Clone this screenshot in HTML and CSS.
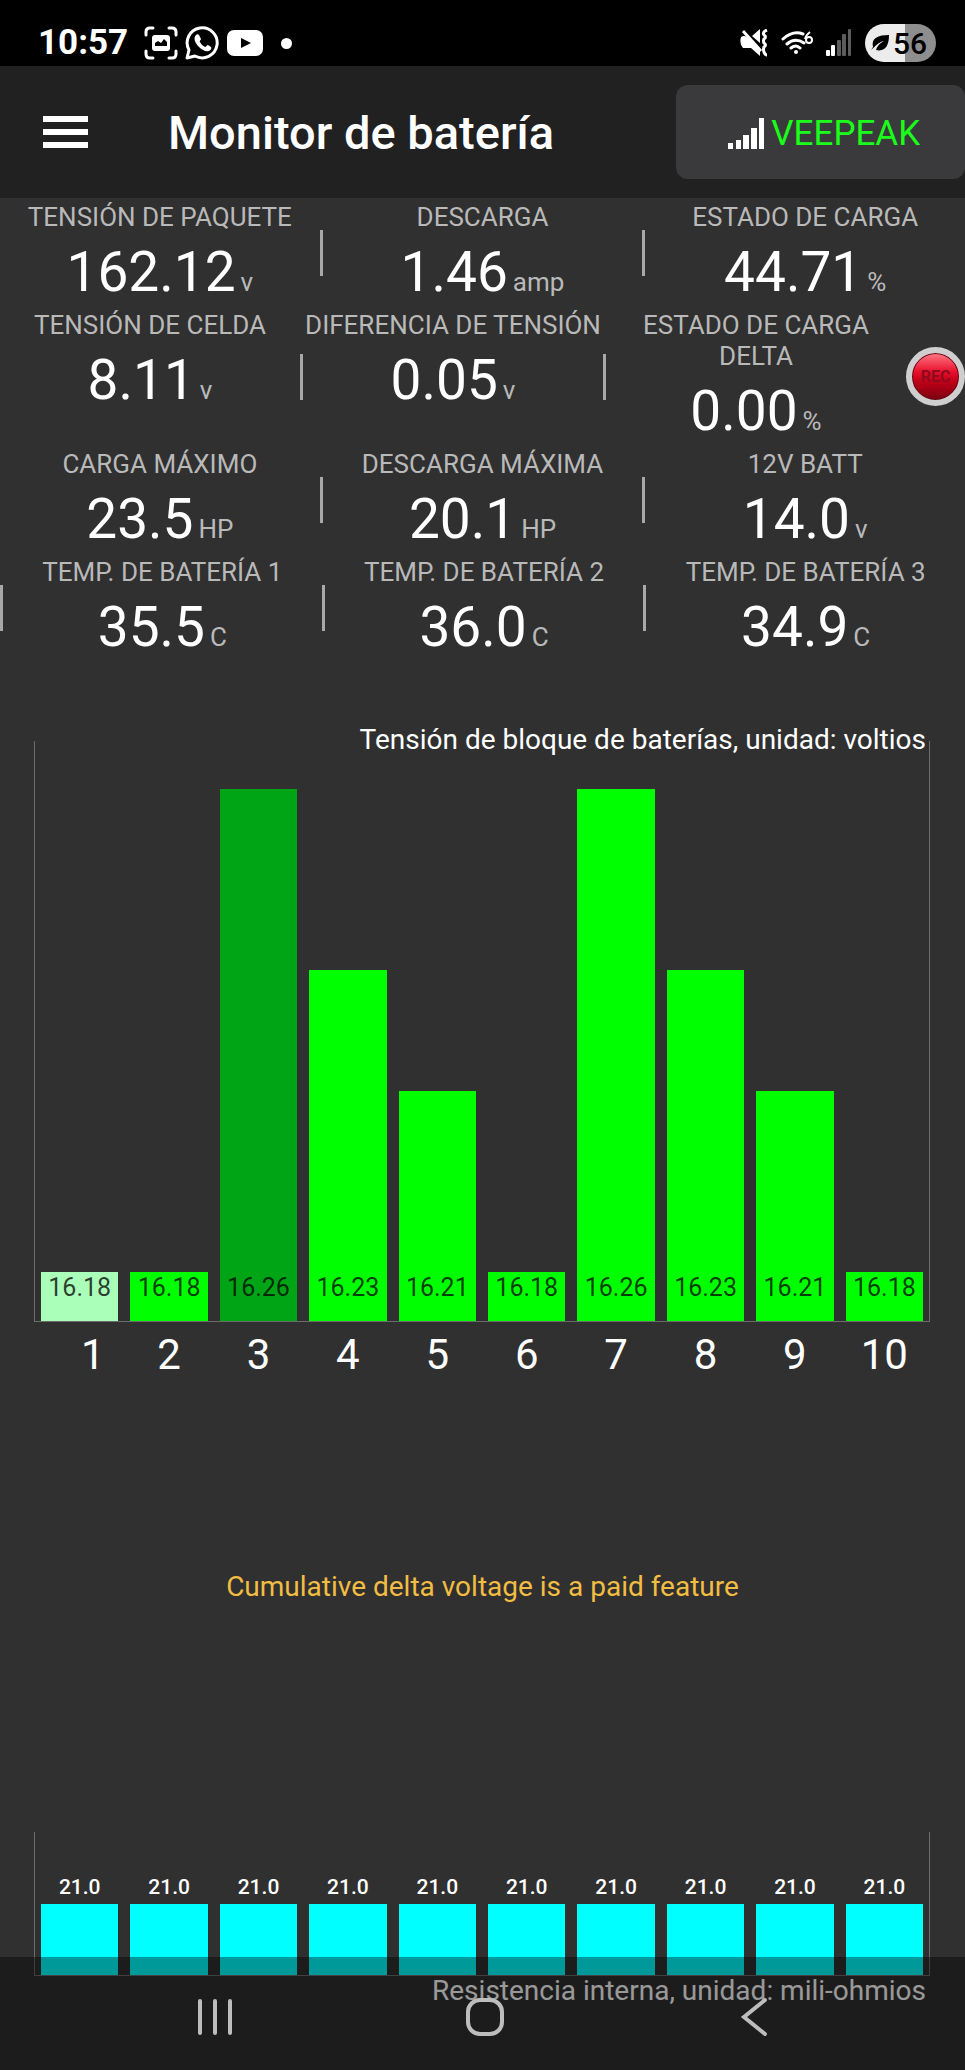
FILE: index.html
```html
<!DOCTYPE html>
<html lang="es">
<head>
    <meta charset="UTF-8">
    <meta name="viewport" content="width=device-width, initial-scale=1.0">
    <title>Monitor de batería</title>
    <link rel="stylesheet" href="styles.css">
</head>
<body>
<div class="status-bar">
    <span class="clock">10:57</span>
    <div class="status-left">
        <svg width="34" height="34" viewBox="0 0 34 34" fill="none" stroke="#fff" stroke-width="3" stroke-linecap="round">
            <path d="M2 9V6q0-4 4-4h3M25 2h3q4 0 4 4v3M32 25v3q0 4-4 4h-3M9 32H6q-4 0-4-4v-3"/>
            <rect x="8" y="9" width="18" height="16" rx="3" fill="#fff" stroke="none"/>
            <path d="M11 20v-3l3-2 3 2 3-4 3 3v4z" fill="#000" stroke="none"/>
        </svg>
        <svg width="34" height="34" viewBox="0 0 34 34">
            <path d="M2 32l2-8A15 15 0 1 1 10 30z" fill="none" stroke="#fff" stroke-width="3" stroke-linejoin="round"/>
            <path d="M11 9c1-1 2-1 3 0l2 4c0 1-2 2-1 3 1 2 3 4 5 5 1 0 2-2 3-2l3 2c1 1 0 3-2 4-3 1-7-1-10-4-4-4-6-9-3-12z" fill="#fff"/>
        </svg>
        <svg width="38" height="28" viewBox="0 0 38 28">
            <rect x="1" y="1" width="36" height="26" rx="7" fill="#fff"/>
            <path d="M15 9l10 5-10 5z" fill="#000"/>
        </svg>
        <span class="more-dot"></span>
    </div>
    <div class="status-right">
        <svg width="28" height="28" viewBox="0 0 28 28">
            <path d="M1 8q3-2 6 0l13 13v6l-9-8H3q-4-4-2-11zM12 7l8-7v14z" fill="#fff"/>
            <path d="M3 2l18 20" stroke="#fff" stroke-width="3"/>
            <path d="M27 1q-5 2-3 5 3 2 0 4-1 2 0 4 3 2 0 4-1 3 0 5 1 3 3 3" fill="none" stroke="#fff" stroke-width="3"/>
        </svg>
        <svg width="32" height="24" viewBox="0 0 32 24">
            <path d="M2 8q10-9 20-5M6 13q8-7 17-1M10 17q5-4 9 0" fill="none" stroke="#fff" stroke-width="3" stroke-linecap="round"/>
            <circle cx="15" cy="21" r="2" fill="#fff"/>
            <path d="M29 1q-4 3-5 7" fill="none" stroke="#fff" stroke-width="2"/>
            <circle cx="28" cy="9" r="3" fill="none" stroke="#fff" stroke-width="2"/>
        </svg>
        <svg width="26" height="28" viewBox="0 0 26 28" fill="#5c5c5c">
            <rect x="0" y="21" width="4" height="6" rx="1" fill="#fff"/>
            <rect x="5" y="16" width="4" height="11" rx="1" fill="#fff"/>
            <rect x="11" y="11" width="4" height="16" rx="1"/>
            <rect x="16" y="5" width="4" height="22" rx="1"/>
            <rect x="22" y="0" width="3" height="27" rx="1"/>
        </svg>
        <span class="battery">
            <svg width="20" height="18" viewBox="0 0 20 18">
                <path d="M3 13C1 4 8 1 19 1c0 11-4 17-13 15 1-4 4-7 8-9-6 1-9 6-13 9z" fill="#000"/>
            </svg>
            56
        </span>
    </div>
</div>

<header class="header">
    <button type="button" class="menu-button" aria-label="Menú">
        <span></span>
        <span></span>
        <span></span>
    </button>
    <h1>Monitor de batería</h1>
    <button type="button" class="device-button">
        <svg width="36" height="31" viewBox="0 0 36 31" fill="#fff">
            <rect x="0" y="25" width="5" height="6"/>
            <rect x="8" y="22" width="5" height="9"/>
            <rect x="15" y="17" width="6" height="14"/>
            <rect x="23" y="10" width="6" height="21"/>
            <rect x="31" y="0" width="5" height="31"/>
        </svg>
        VEEPEAK
    </button>
</header>

<main>
    <!-- lecturas -->
    <section class="readings">
        <div class="row">
            <div class="cell">
                <div class="label">TENSIÓN DE PAQUETE</div>
                <div class="value">162.12<small>v</small></div>
            </div>
            <i class="sep"></i>
            <div class="cell">
                <div class="label">DESCARGA</div>
                <div class="value">1.46<small>amp</small></div>
            </div>
            <i class="sep"></i>
            <div class="cell">
                <div class="label">ESTADO DE CARGA</div>
                <div class="value">44.71<small>%</small></div>
            </div>
        </div>
        <div class="row">
            <div class="cell">
                <div class="label">TENSIÓN DE CELDA</div>
                <div class="value">8.11<small>v</small></div>
            </div>
            <i class="sep"></i>
            <div class="cell">
                <div class="label">DIFERENCIA DE TENSIÓN</div>
                <div class="value">0.05<small>v</small></div>
            </div>
            <i class="sep"></i>
            <div class="cell">
                <div class="label">ESTADO DE CARGA DELTA</div>
                <div class="value">0.00<small>%</small></div>
            </div>
            <button type="button" class="rec-button">REC</button>
        </div>
        <div class="row">
            <div class="cell">
                <div class="label">CARGA MÁXIMO</div>
                <div class="value">23.5<small>HP</small></div>
            </div>
            <i class="sep"></i>
            <div class="cell">
                <div class="label">DESCARGA MÁXIMA</div>
                <div class="value">20.1<small>HP</small></div>
            </div>
            <i class="sep"></i>
            <div class="cell">
                <div class="label">12V BATT</div>
                <div class="value">14.0<small>v</small></div>
            </div>
        </div>
        <div class="row">
            <i class="sep"></i>
            <div class="cell">
                <div class="label">TEMP. DE BATERÍA 1</div>
                <div class="value">35.5<small>C</small></div>
            </div>
            <i class="sep"></i>
            <div class="cell">
                <div class="label">TEMP. DE BATERÍA 2</div>
                <div class="value">36.0<small>C</small></div>
            </div>
            <i class="sep"></i>
            <div class="cell">
                <div class="label">TEMP. DE BATERÍA 3</div>
                <div class="value">34.9<small>C</small></div>
            </div>
        </div>
    </section>

    <!-- tensión por bloque -->
    <section class="chart">
        <h2 class="chart-title">Tensión de bloque de baterías, unidad: voltios</h2>
        <div class="plot voltage">
            <div class="bar min" style="height:49px">16.18</div>
            <div class="bar" style="height:49px">16.18</div>
            <div class="bar max" style="height:532px">16.26</div>
            <div class="bar" style="height:351px">16.23</div>
            <div class="bar" style="height:230px">16.21</div>
            <div class="bar" style="height:49px">16.18</div>
            <div class="bar" style="height:532px">16.26</div>
            <div class="bar" style="height:351px">16.23</div>
            <div class="bar" style="height:230px">16.21</div>
            <div class="bar" style="height:49px">16.18</div>
        </div>
        <div class="axis">
            <span>1</span>
            <span>2</span>
            <span>3</span>
            <span>4</span>
            <span>5</span>
            <span>6</span>
            <span>7</span>
            <span>8</span>
            <span>9</span>
            <span>10</span>
        </div>
    </section>

    <p class="notice">Cumulative delta voltage is a paid feature</p>

    <!-- resistencia interna -->
    <section class="chart">
        <div class="plot resistance">
            <div class="item"><span>21.0</span><div class="bar" style="height:71px"></div></div>
            <div class="item"><span>21.0</span><div class="bar" style="height:71px"></div></div>
            <div class="item"><span>21.0</span><div class="bar" style="height:71px"></div></div>
            <div class="item"><span>21.0</span><div class="bar" style="height:71px"></div></div>
            <div class="item"><span>21.0</span><div class="bar" style="height:71px"></div></div>
            <div class="item"><span>21.0</span><div class="bar" style="height:71px"></div></div>
            <div class="item"><span>21.0</span><div class="bar" style="height:71px"></div></div>
            <div class="item"><span>21.0</span><div class="bar" style="height:71px"></div></div>
            <div class="item"><span>21.0</span><div class="bar" style="height:71px"></div></div>
            <div class="item"><span>21.0</span><div class="bar" style="height:71px"></div></div>
        </div>
        <h2 class="chart-title">Resistencia interna, unidad: mili-ohmios</h2>
    </section>
</main>

<nav class="nav-bar">
    <button type="button" aria-label="Recientes">
        <svg width="40" height="40" viewBox="0 0 40 40"><path d="M5 4v32M20 4v32M35 4v32"/></svg>
    </button>
    <button type="button" aria-label="Inicio">
        <svg width="40" height="40" viewBox="0 0 40 40"><rect x="3" y="3" width="34" height="34" rx="12"/></svg>
    </button>
    <button type="button" aria-label="Atrás">
        <svg width="40" height="40" viewBox="0 0 40 40"><path d="M30 3L9 20l21 17"/></svg>
    </button>
</nav>
</body>
</html>
```

FILE: styles.css
```css
* {
    box-sizing: border-box;
}

body {
    margin: 0;
    background-color: #303030;
    color: #fff;
    font-family: Roboto, "Liberation Sans", sans-serif;
}

h1, h2, p {
    margin: 0;
}

button {
    border: none;
    padding: 0;
    background: none;
    color: inherit;
    font-family: inherit;
}

/* barra de estado */
.status-bar {
    display: flex;
    align-items: center;
    height: 66px;
    padding: 20px 29px 0 38px;
    background-color: #000;
}

.clock {
    font-size: 35px;
    font-weight: 700;
    line-height: 46px;
}

.status-left {
    display: flex;
    align-items: center;
    gap: 7px;
    margin-left: 16px;
}

.more-dot {
    width: 11px;
    height: 11px;
    margin-left: 10px;
    border-radius: 50%;
    background-color: #fff;
}

.status-right {
    display: flex;
    align-items: center;
    gap: 13px;
    margin-left: auto;
}

.battery {
    display: flex;
    align-items: center;
    gap: 3px;
    height: 38px;
    padding: 0 9px 0 5px;
    border-radius: 19px;
    background: linear-gradient(90deg, #ececec 56%, #8e8e8e 56%);
    color: #000;
    font-size: 30px;
    font-weight: 500;
}

/* cabecera */
.header {
    display: flex;
    align-items: center;
    height: 132px;
    padding-left: 43px;
    background-color: #212121;
}

.menu-button {
    display: flex;
    flex-direction: column;
    gap: 7px;
    width: 45px;
}

.menu-button span {
    height: 6px;
    background-color: #fff;
}

.header h1 {
    margin-left: 80px;
    font-size: 47px;
    font-weight: 500;
}

.device-button {
    display: flex;
    align-items: center;
    justify-content: center;
    gap: 7px;
    width: 30vw;
    height: 94px;
    margin-left: auto;
    padding: 2px 0 0 8px;
    border-radius: 12px;
    background-color: #3a3a3c;
    color: #1aff1a;
    font-size: 35px;
}

/* lecturas */
.readings {
    padding-top: 4px;
}

.row {
    display: flex;
    align-items: center;
    margin-bottom: 6px;
}

.cell {
    flex: 1 1 0;
    align-self: flex-start;
    text-align: center;
}

.label {
    color: #b9b9b9;
    font-size: 26px;
    line-height: 31px;
}

.value {
    padding-top: 7px;
    font-size: 55px;
    line-height: 64px;
}

.value small {
    margin-left: 5px;
    color: #b9b9b9;
    font-size: 26px;
    line-height: 31px;
}

.sep {
    width: 3px;
    height: 46px;
    background-color: #a8a8a8;
}

.rec-button {
    width: 59px;
    height: 59px;
    border: 6px solid #cfcfcf;
    border-radius: 50%;
    background: linear-gradient(#ff7a86, #e8102c 40%, #c00018 60%, #7a0010);
    box-shadow: inset 0 0 0 1px #5a0a14;
    color: #8e0a1c;
    font-size: 16px;
    font-weight: 700;
}

/* gráficas */
.chart {
    padding: 0 35px 0 34px;
}

.chart-title {
    padding-right: 4px;
    font-size: 28px;
    font-weight: 400;
    line-height: 34px;
    text-align: right;
}

.readings + .chart {
    padding-top: 58px;
}

.plot {
    display: flex;
    align-items: flex-end;
    gap: 12px;
    padding: 0 6px;
    border: 1px solid #6c6c6c;
    border-top: none;
}

.plot .bar {
    flex: 1;
}

.voltage {
    height: 581px;
    margin-top: -16px;
}

.voltage .bar {
    display: flex;
    align-items: flex-end;
    justify-content: center;
    padding-bottom: 18px;
    background-color: #0f0;
    color: rgba(0, 0, 0, .75);
    font-size: 25px;
    line-height: 30px;
}

.voltage .min {
    background-color: #aaffb9;
}

.voltage .max {
    background-color: #00a516;
}

.axis {
    display: grid;
    grid-template-columns: repeat(10, 1fr);
    gap: 12px;
    padding: 9px 7px 12px;
    font-size: 42px;
    line-height: 48px;
    text-align: center;
}

.axis span:first-child {
    padding-left: 26px;
}

.notice {
    padding: 179px 0 228px;
    color: #f2bd42;
    font-size: 28px;
    line-height: 34px;
    text-align: center;
}

.resistance {
    height: 144px;
}

.resistance + .chart-title {
    line-height: 30px;
}

.item {
    flex: 1;
    font-size: 21px;
    font-weight: 500;
    line-height: 34px;
    text-align: center;
}

.item .bar {
    background-color: #0ff;
}

/* barra de navegación, encima del contenido */
.nav-bar {
    position: fixed;
    right: 0;
    bottom: 0;
    left: 0;
    display: flex;
    justify-content: space-around;
    align-items: center;
    height: 113px;
    padding: 6px 75px 0 80px;
    background-color: rgba(0, 0, 0, .4);
}

.nav-bar svg {
    display: block;
    fill: none;
    stroke: #bdbdbd;
    stroke-width: 4;
    stroke-linecap: round;
}
```
